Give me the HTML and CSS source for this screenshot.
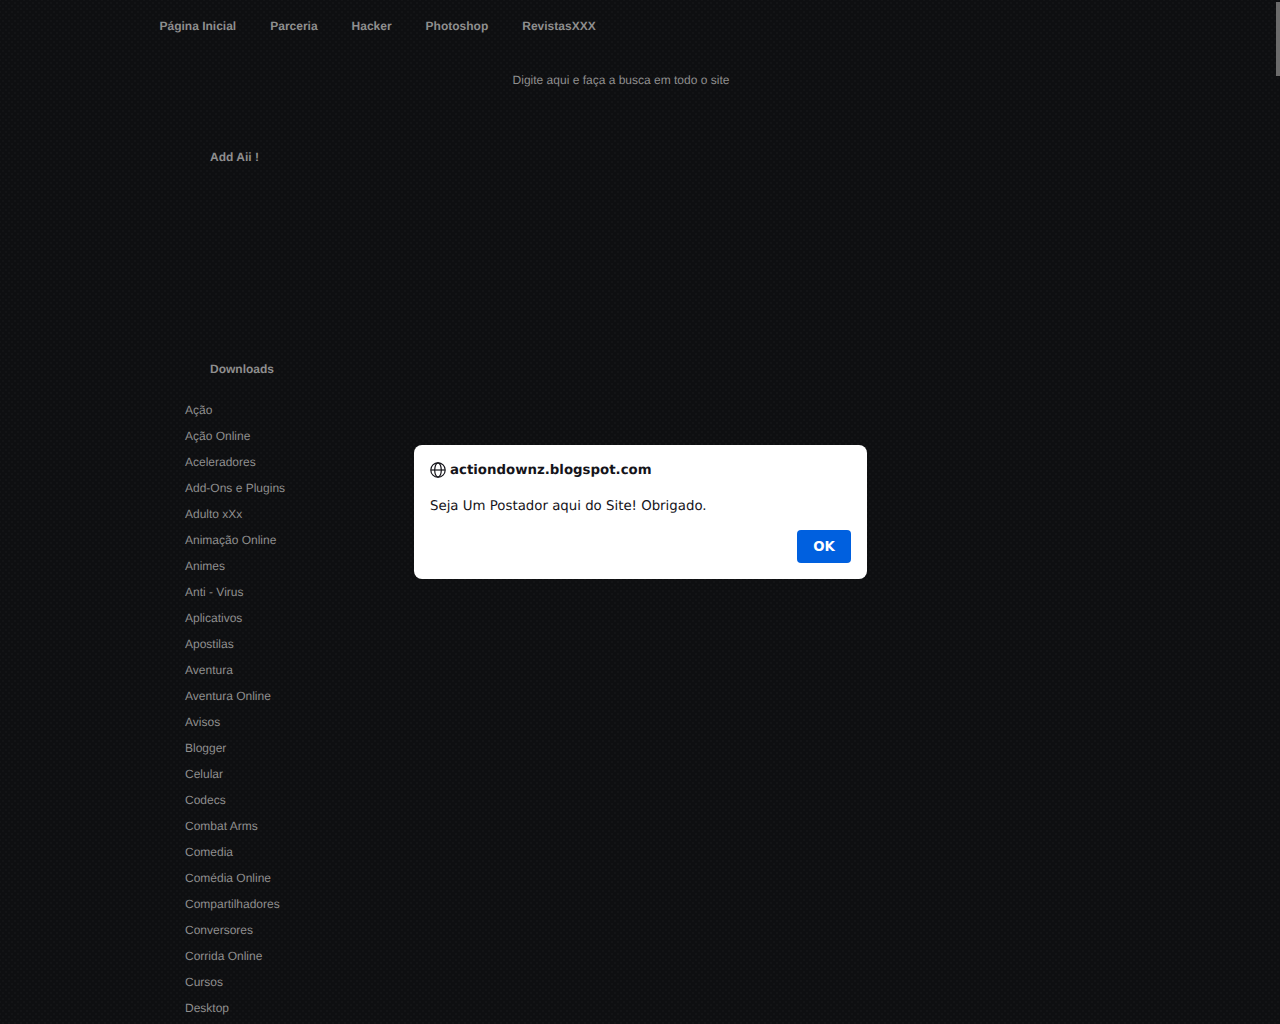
FILE: index.html
```html
<!DOCTYPE html>
<html lang="en">
<head>
  <meta charset="UTF-8">
  <title>Action Downz</title>
  <link rel="stylesheet" href="styles.css">
</head>
<body>
  <div class="wrapper">
    <ul class="nav">
      <li>Página Inicial</li>
      <li>Parceria</li>
      <li>Hacker</li>
      <li>Photoshop</li>
      <li>RevistasXXX</li>
    </ul>
    <div class="search">Digite aqui e faça a busca em todo o site</div>
    <div class="sidebar">
      <h2 class="widget-title">Add Aii !</h2>
      <div class="ad-space"></div>
      <h2 class="widget-title">Downloads</h2>
      <ul class="labels">
        <li>Ação</li>
        <li>Ação Online</li>
        <li>Aceleradores</li>
        <li>Add-Ons e Plugins</li>
        <li>Adulto xXx</li>
        <li>Animação Online</li>
        <li>Animes</li>
        <li>Anti - Virus</li>
        <li>Aplicativos</li>
        <li>Apostilas</li>
        <li>Aventura</li>
        <li>Aventura Online</li>
        <li>Avisos</li>
        <li>Blogger</li>
        <li>Celular</li>
        <li>Codecs</li>
        <li>Combat Arms</li>
        <li>Comedia</li>
        <li>Comédia Online</li>
        <li>Compartilhadores</li>
        <li>Conversores</li>
        <li>Corrida Online</li>
        <li>Cursos</li>
        <li>Desktop</li>
      </ul>
    </div>
  </div>

  <div class="scroll-thumb"></div>

  <div class="dialog">
    <div class="dialog-title">
      <svg class="globe" width="16" height="16" viewBox="0 0 16 16" fill="none" stroke="#15141a" stroke-width="1.2">
        <circle cx="8" cy="8" r="7.2"/>
        <ellipse cx="8" cy="8" rx="3.3" ry="7.2"/>
        <path d="M1 8h14"/>
      </svg>
      <span>actiondownz.blogspot.com</span>
    </div>
    <p class="dialog-text">Seja Um Postador aqui do Site! Obrigado.</p>
    <div class="dialog-actions">
      <button class="ok">OK</button>
    </div>
  </div>
</body>
</html>
```

FILE: styles.css
```css
html, body {
  margin: 0;
  padding: 0;
}
body {
  height: 1024px;
  overflow: hidden;
  background-color: #0e0f11;
  background-image:
    radial-gradient(circle, rgba(255, 255, 255, 0.018) 1px, transparent 1.5px),
    radial-gradient(circle, rgba(255, 255, 255, 0.018) 1px, transparent 1.5px);
  background-size: 6px 6px;
  background-position: 0 0, 3px 3px;
  font-family: "Liberation Sans", Arial, sans-serif;
  font-size: 12px;
  color: #8e8e8e;
  text-rendering: geometricPrecision;
}
.wrapper {
  width: 960px;
  margin-left: 142.5px;
}
.nav {
  display: flex;
  margin: 0;
  padding: 19px 0 0;
  list-style: none;
  font-weight: bold;
  line-height: 14px;
}
.nav li {
  padding: 0 17px;
}
.search {
  margin-top: 40px;
  width: 957px;
  text-align: center;
  line-height: 14px;
}
.sidebar {
  width: 200px;
  margin-top: 63px;
  margin-left: 27.5px;
}
.widget-title {
  margin: 0;
  padding-left: 40px;
  font-size: 12px;
  line-height: 14px;
}
.ad-space {
  height: 198px;
}
.labels {
  margin: 21px 0 0;
  padding: 0;
  list-style: none;
}
.labels li {
  height: 26px;
  line-height: 26px;
  padding-left: 15px;
}
.scroll-thumb {
  position: fixed;
  top: 2px;
  right: 0;
  width: 4px;
  height: 74px;
  background: #6b6b6b;
}
.dialog {
  position: fixed;
  top: 445px;
  left: 414px;
  width: 421px;
  height: 102px;
  padding: 16px;
  background: #fff;
  border-radius: 8px;
  font-family: "DejaVu Sans", sans-serif;
  color: #15141a;
}
.dialog-title {
  display: flex;
  align-items: center;
  gap: 4px;
  height: 18px;
  font-size: 13.333px;
  font-weight: bold;
}
.globe {
  margin-bottom: 1px;
}
.dialog-text {
  margin: 20px 0 0;
  font-size: 13.333px;
  line-height: 16px;
}
.dialog-actions {
  display: flex;
  justify-content: flex-end;
  margin-top: 15px;
}
.ok {
  width: 54px;
  height: 33px;
  padding: 0;
  border: none;
  border-radius: 4px;
  background: #0060df;
  color: #fff;
  font-family: "DejaVu Sans", sans-serif;
  font-size: 13.333px;
  font-weight: bold;
}
```
